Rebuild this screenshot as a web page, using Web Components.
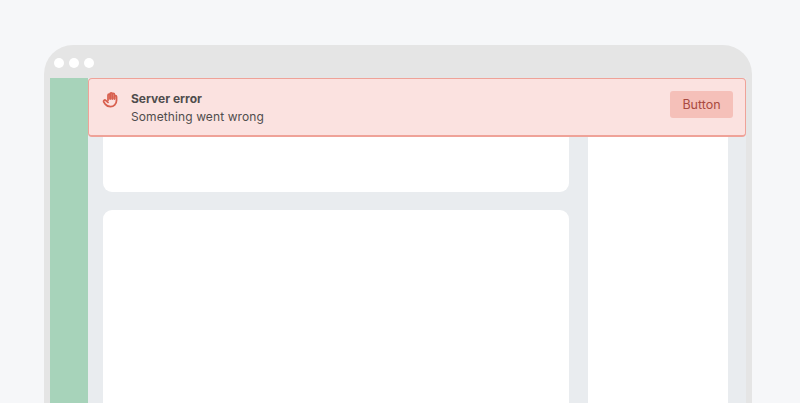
<!doctype html>
<html><head><meta charset="utf-8">
<style>
html,body{margin:0;height:403px;overflow:hidden;background:#f6f7f9;font-family:Inter,"Liberation Sans",sans-serif}
body{display:block}
</style></head><body>
<app-window>
  <error-banner slot="banner" title-text="Server error" message="Something went wrong" action="Button"></error-banner>
  <app-card style="height:114px"></app-card>
  <app-card style="height:400px"></app-card>
</app-window>
<script>
class AppWindow extends HTMLElement{
  constructor(){super();this.attachShadow({mode:'open'}).innerHTML=`<style>
  :host{display:block;margin:45px 48px 0 44px;height:500px;background:#e5e5e5;border-radius:29px 29px 0 0;padding:0 6px;box-sizing:border-box}
  .bar{height:33px;display:flex;align-items:center;gap:5px;padding:3px 0 0 3.500px;box-sizing:border-box}
  .dot{width:10px;height:10px;border-radius:50%;background:#fff}
  .body{position:relative;display:flex;height:467px}
  .side{width:38px;background:#a7d3ba;flex:none}
  .main{flex:1;background:#e9ecef;display:grid;grid-template-columns:466px 140px;column-gap:19px;padding:0 18px 0 15px}
  .col{display:flex;flex-direction:column;gap:18px}
  .aside{background:#fff}
  ::slotted([slot=banner]){position:absolute;left:38px;right:0;top:0}
  </style>
  <div class="bar"><span class="dot"></span><span class="dot"></span><span class="dot"></span></div>
  <div class="body"><div class="side"></div>
    <div class="main"><div class="col"><slot></slot></div><div class="aside"></div></div>
    <slot name="banner"></slot>
  </div>`}
}
class AppCard extends HTMLElement{
  constructor(){super();this.attachShadow({mode:'open'}).innerHTML=`<style>:host{display:block;background:#fff;border-radius:9px;flex:none}</style>`}
}
class ErrorBanner extends HTMLElement{
  constructor(){super();this.attachShadow({mode:'open'}).innerHTML=`<style>
  :host{display:flex;box-sizing:border-box;height:59px;background:#fbe2e0;border:1px solid #efa298;border-bottom-width:2px;border-radius:4px;padding:12px 12px 0 13px;color:#4f4d4d}
  svg{width:17px;height:17px;flex:none;margin-top:0;color:#d8604f}
  .txt{margin-left:12px;flex:1;font-size:12px;letter-spacing:.1px}
  .t{font-weight:700;font-size:12px;line-height:16px;letter-spacing:0}
  .m{line-height:20px;margin-top:0}
  button{all:unset;box-sizing:border-box;width:63px;height:27px;background:#f5c0b9;border-radius:3px;color:#a94a40;font-size:12.500px;text-align:center;line-height:27px;font-family:inherit}
  </style>
  <svg viewBox="0 0 24 24" fill="none" stroke="currentColor" stroke-width="2.500" stroke-linecap="round" stroke-linejoin="round"><path d="M8.500 13V6a1.500 1.500 0 0 1 3 0v5"/><path d="M11.500 11V4a1.500 1.500 0 0 1 3 0v7"/><path d="M14.500 11V5a1.500 1.500 0 0 1 3 0v6"/><path d="M17.500 11V8a1.500 1.500 0 0 1 3 0v5.500a8.500 8.500 0 0 1-8.500 8.500c-4 0-6-1.500-7.500-3.500L2.500 15.500a1.800 1.800 0 0 1 2.700-2.300L8.500 16"/></svg>
  <div class="txt"><div class="t"></div><div class="m"></div></div><button></button>`;
  }
  connectedCallback(){const s=this.shadowRoot;s.querySelector('.t').textContent=this.getAttribute('title-text');s.querySelector('.m').textContent=this.getAttribute('message');s.querySelector('button').textContent=this.getAttribute('action')}
}
customElements.define('app-window',AppWindow);customElements.define('app-card',AppCard);customElements.define('error-banner',ErrorBanner);
</script></body></html>
